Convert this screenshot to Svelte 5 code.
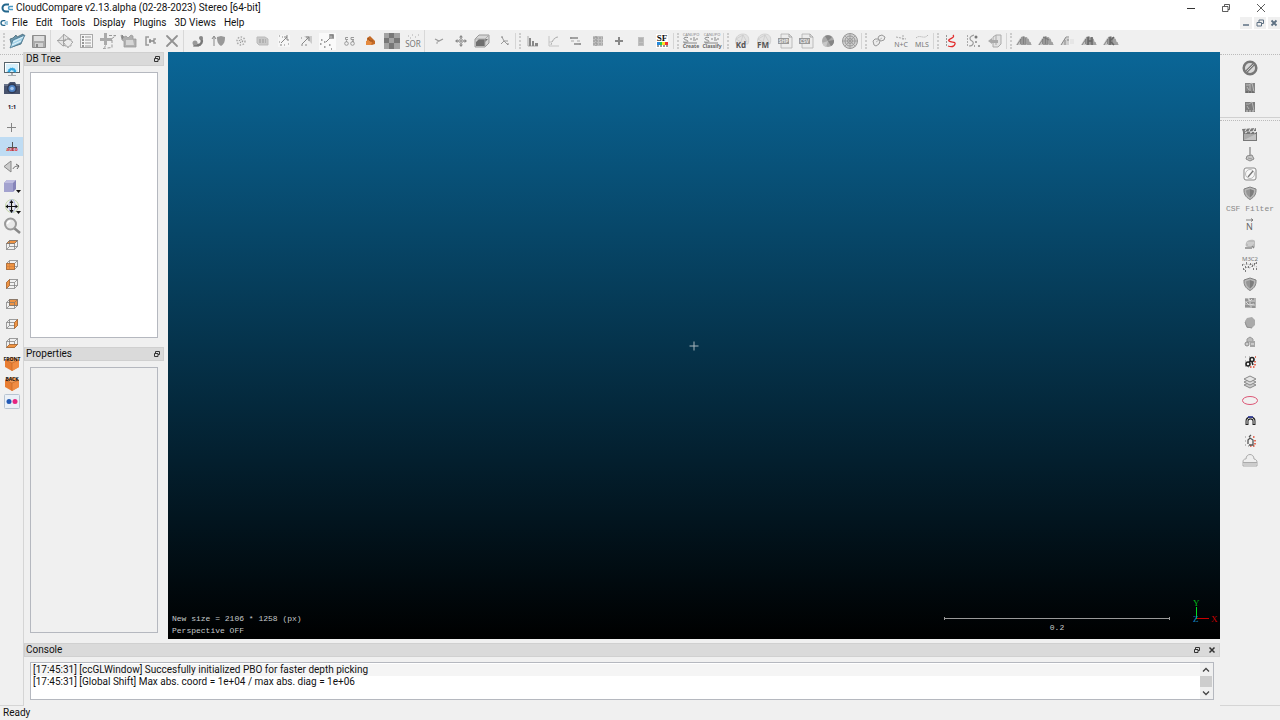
<script lang="ts">
	type Tool = { id: string; label: string };
	type Group = { width: number; handle?: boolean; tools: Tool[] };

	const t = (id: string, label: string): Tool => ({ id, label });

	const menus = ['File', 'Edit', 'Tools', 'Display', 'Plugins', '3D Views', 'Help'];

	const groups: Group[] = [
		{ width: 44, handle: true, tools: [t('open', 'Open'), t('save', 'Save')] },
		{
			width: 129,
			tools: [
				t('pick', 'Point picking'),
				t('list', 'Point list picking'),
				t('clone', 'Clone'),
				t('merge', 'Merge'),
				t('align', 'Match centers'),
				t('delete', 'Delete')
			]
		},
		{
			width: 237,
			tools: [
				t('register', 'Fine registration'),
				t('shieldUp', 'Align'),
				t('subsample', 'Subsample'),
				t('sample', 'Sample points'),
				t('c2c', 'Cloud to cloud distance'),
				t('c2m', 'Cloud to mesh distance'),
				t('pairs', 'Closest point set'),
				t('stats', 'Statistical test'),
				t('label', 'Label connected components'),
				t('checker', 'Cross section'),
				t('sor', 'SOR filter')
			]
		},
		{
			width: 87,
			tools: [
				t('segment', 'Segment'),
				t('move', 'Translate and rotate'),
				t('section', 'Clipping box'),
				t('trace', 'Trace polyline')
			]
		},
		{
			width: 151,
			handle: true,
			tools: [
				t('histogram', 'Histogram'),
				t('curve', 'Fit distribution'),
				t('range', 'Filter by value'),
				t('gaussian', 'Gaussian filter'),
				t('plus', 'Add scalar field'),
				t('calc', 'Scalar arithmetic'),
				t('sf', 'Color scale manager')
			]
		},
		{ width: 43, handle: true, tools: [t('canupoCreate', 'Canupo create'), t('canupoClassify', 'Canupo classify')] },
		{
			width: 131,
			handle: true,
			tools: [
				t('kd', 'Kd-tree facets'),
				t('fm', 'Fast marching facets'),
				t('shp', 'Export facets SHP'),
				t('csv', 'Export facets CSV'),
				t('disk', 'Classify facets'),
				t('stereogram', 'Stereogram')
			]
		},
		{ width: 65, handle: true, tools: [t('hough', 'Hough normals'), t('nc', 'Normals and curvature'), t('mls', 'MLS smoothing')] },
		{
			width: 66,
			handle: true,
			tools: [t('sRed', 'Extract sections'), t('sGray', 'Unfold'), t('box', 'Export sections')]
		},
		{
			width: 109,
			handle: true,
			tools: [
				t('peakA', 'Mesh boolean A'),
				t('peakB', 'Mesh boolean B'),
				t('peakC', 'Train'),
				t('peakD', 'Classify high'),
				t('peakE', 'Classify K')
			]
		}
	];

	const viewTools: Tool[] = [
		t('display', 'Display settings'),
		t('camera', 'Camera settings'),
		t('oneToOne', 'Zoom 1:1'),
		t('cross', 'Pick rotation center'),
		t('crossAuto', 'Auto-pick rotation center'),
		t('level', 'Level'),
		t('cube', 'Projection mode'),
		t('pan', 'Pivot visibility'),
		t('zoom', 'Zoom on selection'),
		t('viewTop', 'Top view'),
		t('viewFront', 'Front view'),
		t('viewLeft', 'Left side view'),
		t('viewBack', 'Back view'),
		t('viewRight', 'Right side view'),
		t('viewBottom', 'Bottom view'),
		t('isoFront', 'Front isometric view'),
		t('isoBack', 'Back isometric view'),
		t('stereo', 'Stereo mode')
	];

	const shaderTools: Tool[] = [t('forbid', 'Remove filter'), t('edl', 'EDL shader'), t('ssao', 'SSAO shader')];

	const pluginTopTools: Tool[] = [t('clap', 'Animation'), t('broom', 'Virtual broom'), t('compass', 'Compass'), t('shield', 'CSF')];

	const pluginTools: Tool[] = [
		t('normal', 'Hough normals computation'),
		t('hpr', 'Hidden point removal'),
		t('m3c2', 'M3C2 distance'),
		t('shield', 'Ambient occlusion'),
		t('noise', 'Poisson reconstruction'),
		t('blob', 'RANSAC shape detection'),
		t('shapes', 'Primitive shapes'),
		t('sra', 'Surface of revolution'),
		t('layers', 'Layers'),
		t('ellipse', 'Ellipser'),
		t('arch', 'Arch fitting'),
		t('tree', 'Tree isolation'),
		t('cloud', 'Voxfall')
	];

	const log = [
		'[17:45:31] [ccGLWindow] Succesfully initialized PBO for faster depth picking',
		'[17:45:31] [Global Shift] Max abs. coord = 1e+04 / max abs. diag = 1e+06'
	];

	// shared pieces of the 18x18 icons
	const wire =
		'<path d="M3.5 7.5h8v6h-8zM6.5 4.5h8v6h-8zM3.5 7.5l3-3M11.5 7.5l3-3M11.5 13.5l3-3M3.5 13.5l3-3" fill="none" stroke="#777" stroke-width=".7"/>';
	const face = (d: string) => `<path d="${d}" fill="#f09443" stroke="#a8622a" stroke-width=".7"/>`;
	const iso = (word: string) =>
		`<path d="M9 3l7 3v7l-7 4-7-4V6z" fill="#e87d32"/><path d="M2 6l7 3 7-3-7-3z" fill="#f3a05c"/><path d="M9 9v8l7-4V6z" fill="#f08c43"/><path d="M2 6l7 3v8M9 9l7-3" fill="none" stroke="#b55d22" stroke-width=".5"/><text x="9" y="7" font-size="5" font-weight="700" text-anchor="middle" fill="#111">${word}</text>`;
	const page = (word: string) =>
		`<path d="M5 2h8l3 3v11H5z" fill="#ececec" stroke="#b0b0b0" stroke-width=".8"/><path d="M13 2v3h3" fill="none" stroke="#999" stroke-width=".8"/><rect x="2" y="6" width="11" height="6" fill="#999"/><text x="7.5" y="10.5" font-size="5" font-weight="700" text-anchor="middle" fill="#e8e8e8">${word}</text>`;
	const ball = (word: string) =>
		`<path d="M4 12c-2-6 2-10 7-10s7 4 5 10z" fill="#e2e2e2" stroke="#c4c4c4" stroke-width=".6"/><path d="M4 7l5 3 2-7 4 7M4 7l7-4" fill="none" stroke="#c9c9c9" stroke-width=".7"/><text x="9" y="16" font-size="8" font-weight="700" text-anchor="middle" fill="#555">${word}</text>`;
	const peaks = (extra: string) =>
		`<path d="M1 13l4-7 2-1v8z" fill="#c6c6c6"/><path d="M6 13V5l3-1 2 2v7z" fill="#999"/><path d="M11 13V5l2 1 2 4 2 3z" fill="#bbb"/><path d="M2 13l4-6M5.5 7v5M8.5 5v7M11 5v7M13 7v6M15 10v3" stroke="#7a7a7a" stroke-width=".8"/>${extra}`;
	const canupo = (word: string) =>
		`<text x="9" y="4" font-size="4" text-anchor="middle" fill="#888">CANUPO</text><path d="M6 5.5c-5-1-5 2-2 2.5s3 3-3 2M2 11h13M8 7h2M11 6h2M11 8h3M14 7h2" fill="none" stroke="#888"/><text x="9" y="16" font-size="5" font-weight="700" text-anchor="middle" fill="#666">${word}</text>`;

	const icons: Record<string, string> = {
		open: '<path d="M2 7l3-1 3-3 1 2 6-3 1 2-3 8-9 3z" fill="#6d97ad" stroke="#486879" stroke-width=".8"/><path d="M5 8l12-5-4 8-11 5z" fill="#a5d3e9" stroke="#4c7890" stroke-width=".8"/><path d="M5 10l10-5M4 13l9-4" stroke="#e2f2f8"/>',
		save: '<path d="M2.5 3.5h13v12h-13z" fill="#aaa" stroke="#8c8c8c"/><path d="M4 4h10v5H4z" fill="#dedede"/><path d="M5 11h8v4H5z" fill="#d0d0d0"/><path d="M6 12h2v3H6z" fill="#888"/>',
		pick: '<path d="M1.5 9L8 2.5 14 7l-3 6-4 1z" fill="#e4e4e4" stroke="#a5a5a5"/><path d="M12 6l1 2 2-1v2l2 1-2 2v2h-2l-1 2-1-2H9v-2l-2-2 2-1V7l2 1z" fill="#ececec" stroke="#999" stroke-width=".8"/><path d="M1 8.5h9M7.5 2v12" stroke="#999" stroke-width=".8"/>',
		list: '<rect x="3.5" y="2.5" width="12" height="13" fill="#f5f5f5" stroke="#aaa"/><path d="M5 5h2M5 8h2M5 11h2M5 14h2" stroke="#777" stroke-width="1.5"/><path d="M8 5h6M8 8h6M8 11h6M8 14h6" stroke="#999"/>',
		clone: '<path d="M5 1h3v5h5v3H8v4H5V9H1V6h4z" fill="#aaa"/><path d="M10 3.5h7l-4 3v9l-9 1 3-3" fill="none" stroke="#999" stroke-dasharray="3 1.5"/>',
		merge: '<path d="M1 3l3 2 2-1 2 2 3-3 2 1v3h3v8H4V9L2 8z" fill="#b0b0b0" stroke="#999" stroke-width=".8"/><path d="M6 8h7l1 5H6z" fill="#d6d6d6"/><path d="M1 5h3M2.5 3v4" stroke="#888"/>',
		align: '<path d="M7 5H4v8h3M14 7h-2v4h2" fill="none" stroke="#999" stroke-width="1.5"/><path d="M7 9h5" stroke="#888" stroke-width="1.5"/><path d="M8 7v4" stroke="#888" stroke-width="1.5"/>',
		delete: '<path d="M4 4l10 10M14 4L4 14" stroke="#929292" stroke-width="1.8" stroke-linecap="round"/>',
		register: '<path d="M12 6c2 4 0 7-3 7H5" fill="none" stroke="#777" stroke-width="2.5"/><circle cx="12" cy="6" r="2" fill="#888"/><circle cx="6" cy="11" r="2.5" fill="#999"/><path d="M4 14h6" stroke="#777"/>',
		shieldUp: '<path d="M4 14V5M2 7l2-3 2 3" fill="none" stroke="#888"/><path d="M7 5l4-1 4 1c0 5-1 7-4 9-3-2-4-4-4-9z" fill="#999"/>',
		subsample: '<circle cx="9" cy="9" r="4" fill="none" stroke="#aaa" stroke-width="1.5" stroke-dasharray="1.5 1.5"/><circle cx="9" cy="9" r="1.5" fill="none" stroke="#999" stroke-width="1.5" stroke-dasharray="1 1"/>',
		sample: '<path d="M4 5h8l3 2v6H6l-2-2z" fill="#c9c9c9" stroke="#bbb"/><path d="M6 8h7M6 10h7" stroke="#999" stroke-dasharray="2 1"/>',
		c2c: '<rect x="3" y="3" width="12" height="12" fill="#f6f6f6"/><path d="M4 4h1M7 5h1M11 4h2M12 8h2M4 10h1M5 13h2M9 13h1M13 12h1" stroke="#aaa" stroke-width="1.5"/><path d="M6 11l6-6M9 5h3v3" fill="none" stroke="#888"/>',
		c2m: '<path d="M7 4h8v8z" fill="#ccc"/><path d="M4 6h1M4 13h2M8 13h2" stroke="#aaa" stroke-width="1.5"/><path d="M5 12l7-7M9 5h3v4" fill="none" stroke="#888"/>',
		pairs: '<rect x="1" y="1" width="17" height="17" fill="#fafafa"/><rect x="11" y="2" width="5" height="5" fill="#aaa"/><path d="M12 3h3v3" fill="none" stroke="#777"/><path d="M8 10l4-4" stroke="#888"/><path d="M3 8h1.5M2 12h1.5M6 10h1.5M6 15h1.5M11 13h1.5M13 17h1" stroke="#888" stroke-width="1.5"/>',
		stats: '<path d="M8 5.5H5.5v2H8M14 5.5h-3v2h3" fill="none" stroke="#999"/><circle cx="6.5" cy="11.5" r="1.8" fill="none" stroke="#999"/><circle cx="12.5" cy="11.5" r="1.8" fill="none" stroke="#999"/><path d="M6 9h1M12 9h2" stroke="#777"/>',
		label: '<path d="M6 12V6l3-2 2 2 3 3 0 3-3 1z" fill="#c46a26"/><path d="M5 13V9l3-1 3 2-1 3z" fill="#e58a3e"/><path d="M7 6l2 3 3 0" fill="none" stroke="#9b5220"/>',
		checker: '<rect x="1" y="1" width="16" height="16" fill="#777"/><path d="M1 1h5v5H1zM11 1h6v5h-6zM6 6h5v5H6zM1 11h5v6H1zM11 11h6v6h-6z" fill="#a3a3a3"/>',
		sor: '<path d="M4 4h1M8 3h1M11 5h1M14 3h1M6 6h1" stroke="#aaa"/><text x="9" y="15" font-size="8" text-anchor="middle" fill="#777">SOR</text>',
		segment: '<path d="M5 7l4 2 4-2M7 10l2-1" fill="none" stroke="#999" stroke-width="1.2"/><circle cx="7" cy="11" r=".8" fill="#999"/>',
		move: '<path d="M9 4v10M4 9h10" stroke="#888"/><path d="M7 5.5L9 3l2 2.5zM7 12.5L9 15l2-2.5zM5.5 7L3 9l2.5 2zM12.5 7L15 9l-2.5 2z" fill="#888"/><path d="M6 9l3-3 3 3-3 3z" fill="none" stroke="#999" stroke-width=".7"/>',
		section: '<path d="M2 7l4-4h10v8l-4 4H2z" fill="#d6d6d6" stroke="#999"/><path d="M3 10l3-3h9l-3 3v4H3z" fill="#6f6f6f"/><path d="M2 7h10v8M12 7l4-4" fill="none" stroke="#aaa"/>',
		trace: '<path d="M7 5l2 4h4M6 12l3-3 4 4" fill="none" stroke="#999"/><path d="M6 5h2M12 12h2" stroke="#888"/>',
		histogram: '<path d="M4 4v10h10" fill="none" stroke="#aaa"/><path d="M5 6h2v8H5zM8 9h2v5H8zM11 11h3v3h-3z" fill="#888"/>',
		curve: '<path d="M4 4v10h10M4 10h3l3-4 3-1" fill="none" stroke="#c4c4c4"/><path d="M6 13c1-4 3-8 7-8" fill="none" stroke="#b0b0b0" stroke-dasharray="2 1"/>',
		range: '<path d="M4 6h7M7 12h7" stroke="#888" stroke-width="1.5"/><path d="M4 9h3M10 9h3" stroke="#aaa"/><path d="M4 5v2M13 11v2" stroke="#999" stroke-width="2"/>',
		gaussian: '<rect x="4" y="4" width="10" height="10" fill="#c0c0c0"/><path d="M4 6h10M4 9h10M4 12h10M7 4v10" stroke="#929292" stroke-dasharray="2 1"/>',
		plus: '<path d="M9 5v8M5 9h8" stroke="#888" stroke-width="2"/>',
		calc: '<rect x="6" y="5" width="6" height="9" fill="#c0c0c0"/><path d="M7 7h4M7 9h4M7 12h4" stroke="#a5a5a5"/>',
		sf: '<rect x="3" y="2" width="12" height="14" fill="#fff"/><text x="9" y="9" font-size="9" font-weight="700" font-family="Liberation Serif" text-anchor="middle" fill="#111">SF</text><path d="M4 10h3v3H4z" fill="#28d"/><path d="M7 10h2v3H7z" fill="#2c5"/><path d="M9 10h3v3H9z" fill="#fd2"/><path d="M12 10h3v3h-3z" fill="#e33"/><path d="M4 14h11" stroke="#333" stroke-dasharray="2 1"/>',
		canupoCreate: canupo('Create'),
		canupoClassify: canupo('Classify'),
		kd: ball('Kd'),
		fm: ball('FM'),
		shp: page('SHP'),
		csv: page('CSV'),
		disk: '<circle cx="9" cy="9" r="6" fill="#aaa"/><path d="M9 9L6 4a6 6 0 0 1 7 1zM9 9l6-1a6 6 0 0 1-3 6z" fill="#858585"/><path d="M9 9l-6 2a6 6 0 0 0 4 4z" fill="#c8c8c8"/>',
		stereogram: '<circle cx="9" cy="9" r="7.5" fill="#d0d0d0" stroke="#999"/><circle cx="9" cy="9" r="5" fill="none" stroke="#999"/><circle cx="9" cy="9" r="2.5" fill="none" stroke="#999"/><path d="M1 9h16M9 1v16M3.5 3.5l11 11M14.5 3.5l-11 11" stroke="#999" stroke-width=".8"/>',
		hough: '<path d="M3 9l2-2h3l2 2-1 3-3 2-2-1zM8 6l1-2 3-1 3 2-1 3-3 1-2-1z" fill="#ececec" stroke="#999"/><path d="M6 10l6-4" stroke="#bbb"/>',
		nc: '<path d="M4 5l10 2M11 3v5" stroke="#aaa" stroke-dasharray="2 1"/><text x="9" y="15" font-size="7" text-anchor="middle" fill="#777">N+C</text>',
		mls: '<path d="M3 6c4-4 8 2 12-3" fill="none" stroke="#aaa" stroke-dasharray="1 1"/><text x="9" y="15" font-size="7" text-anchor="middle" fill="#777">MLS</text>',
		sRed: '<path d="M4.5 3v12" stroke="#999" stroke-dasharray="2 1"/><path d="M11 3c3 3-6 4-4 6s7 0 6 3-4 3-7 2" fill="none" stroke="#e22c2c" stroke-width="1.3"/>',
		sGray: '<path d="M3.5 3v12" stroke="#aaa" stroke-dasharray="2 1"/><path d="M10 3C4 5 6 8 8 9s2 5-3 5" fill="none" stroke="#999" stroke-width="1.2"/><circle cx="12" cy="5" r="1.5" fill="#777"/><path d="M11 10h2M14 14h2M10 14h1" stroke="#888" stroke-width="1.5"/>',
		box: '<path d="M7 5l3-2h5v9l-3 3H7z" fill="#e2e2e2" stroke="#aaa"/><path d="M2 9l4-3v2h6v3H6v1z" fill="#aaa"/><path d="M10 3v10" stroke="#aaa"/>',
		peakA: peaks(''),
		peakB: peaks('<path d="M6 5l6 3" stroke="#777"/>'),
		peakC: '<path d="M3 13l4-7h4v7" fill="#d0d0d0"/><path d="M3 13l5-8h3M7 8v5M10 7v2" fill="none" stroke="#888"/><path d="M12 7h4v5h-4z" fill="#e6e6e6"/>',
		peakD: peaks('<path d="M8 5v8M12 5v8M8 9h4" stroke="#666" stroke-width="1.5"/>'),
		peakE: peaks('<path d="M8 5v8M12 5L8 9l4 4" fill="none" stroke="#666" stroke-width="1.5"/>'),
		display: '<rect x="1.5" y="3.5" width="15" height="10" fill="#fff" stroke="#57656d"/><path d="M3 5h12v8H3z" fill="#d5effb"/><path d="M5 13a4 4 0 0 1 8 0h-2a2 2 0 0 0-4 0z" fill="#2fa5df" stroke="#2fa5df" stroke-dasharray="1 1"/><path d="M8 14h2v2H8zM5 16h8v1H5z" fill="#a5abb0"/>',
		camera: '<path d="M1 5h4l2-2h5l1 2h4v10H1z" fill="#48536d"/><circle cx="9" cy="9.5" r="5" fill="#303b56"/><circle cx="9" cy="9.5" r="3.5" fill="#4c80c2"/><circle cx="9" cy="9.5" r="1.8" fill="#a5c5ec"/><path d="M1 6h4M13 6h4" stroke="#8792a5"/>',
		oneToOne: '<text x="9" y="11" font-size="6" font-weight="700" text-anchor="middle" fill="#2b1433">1:1</text>',
		cross: '<path d="M8.5 5v9M4 9.5h9" stroke="#858585"/>',
		crossAuto: '<path d="M9.5 4v9M5 9.5h9" stroke="#555"/><text x="9" y="13" font-size="5" font-weight="700" text-anchor="middle" fill="#df3535">auto</text>',
		level: '<path d="M8 4v11L1 9.5z" fill="#ccc" stroke="#888"/><path d="M10 12c1-2 2-3 6-3M13 7l3 2-2 3" fill="none" stroke="#666"/>',
		cube: '<path d="M1 6l3-3h9v9l-3 3H1z" fill="#8684b9"/><path d="M1 6h9v9H1z" fill="#a3a2cf"/><path d="M1 6l3-3h9l-3 3z" fill="#bfbde0"/><path d="M13 13h5l-2.5 3z" fill="#111"/>',
		pan: '<circle cx="9" cy="9" r="6.5" fill="none" stroke="#c3d6a8"/><ellipse cx="9" cy="9" rx="3" ry="6.5" fill="none" stroke="#b3bce5"/><path d="M8.5 4v11M3 9.5h11" stroke="#111" stroke-width="1.2"/><path d="M6.5 6l2-3 2 3zM6.5 13l2 3 2-3zM5 7.5l-2.5 2 2.5 2zM12.5 7.5l2.5 2-2.5 2z" fill="#111"/><path d="M13 14h5l-2.5 3z" fill="#111"/>',
		zoom: '<path d="M11 12l6 5" stroke="#888" stroke-width="2.5"/><circle cx="7.5" cy="8" r="5.5" fill="#e8e8e8" stroke="#999" stroke-width="2"/><path d="M4.5 8a3 3 0 0 1 3-3" fill="none" stroke="#fff" stroke-width="1.5"/>',
		viewTop: face('M3.5 7.5l3-3h8l-3 3z') + wire,
		viewFront: wire + face('M3.5 7.5h8v6h-8z') + '<path d="M6.5 7.5v6M3.5 10.5h8" stroke="#c47a42" stroke-width=".5"/>',
		viewLeft: wire + face('M3.5 7.5l3-3v6l-3 3z'),
		viewBack: face('M6.5 4.5h8v6h-8z') + wire,
		viewRight: wire + face('M11.5 7.5l3-3v6l-3 3z'),
		viewBottom: wire + face('M3.5 13.5l3-3h8l-3 3z'),
		isoFront: iso('FRONT'),
		isoBack: iso('BACK'),
		stereo: '<rect x="1.5" y="1.5" width="15" height="14" rx="1" fill="#eaf0f7" stroke="#b8c4d1"/><circle cx="6" cy="8.5" r="2.5" fill="#2159b5"/><circle cx="12" cy="8.5" r="2.5" fill="#e52580"/>',
		forbid: '<circle cx="9" cy="9" r="6.3" fill="#d9d9d9" stroke="#777" stroke-width="2.5"/><path d="M5 13l8-8" stroke="#777" stroke-width="3"/><path d="M5.5 12.5l7-7" stroke="#ccc"/>',
		edl: '<rect x="4" y="4" width="10" height="10" fill="#858585"/><path d="M5 6h3l3-2 1 4 1 5M6 8l2 3M9 6v6" fill="none" stroke="#bbb"/><path d="M5 13h8" stroke="#555" stroke-dasharray="2 1"/>',
		ssao: '<rect x="4" y="4" width="10" height="10" fill="#7d7d7d"/><path d="M5 6h3l3-2 1 4 1 5M6 8l2 3" fill="none" stroke="#b5b5b5"/><path d="M5 13h8" stroke="#ccc" stroke-dasharray="2 1"/>',
		clap: '<path d="M2 6h14v9H2z" fill="#777"/><path d="M3 8h12v6H3z" fill="#aaa"/><path d="M3 14l12-6v6z" fill="#c3c3c3"/><path d="M1 3l14-1v3L2 6z" fill="#777"/><path d="M4 5l2-3M8 5l2-3M12 5l2-3M4 7l2-1M9 7l2-1M13 7l2-1" stroke="#eee"/>',
		broom: '<path d="M9 2v8" stroke="#888" stroke-width="1.3"/><path d="M6 11l5-1 2 4-4 2-4-2z" fill="#c6c6c6" stroke="#888"/><path d="M7 13l4 1" stroke="#999"/>',
		compass: '<rect x="3" y="3" width="12" height="12" rx="2" fill="#f8f8f8" stroke="#888"/><circle cx="9" cy="9" r="4.5" fill="#f8f8f8" stroke="#aaa" stroke-width=".8"/><path d="M12 6l-5 6" stroke="#777" stroke-width="1.3"/>',
		shield: '<path d="M9 3l6 2c.3 5-1.5 8-6 10.5C4.5 13 2.7 10 3 5z" fill="#b7b7b7" stroke="#808080"/><path d="M9 5l4 1.5c0 3-1.2 5-4 7z" fill="#7d7d7d"/><path d="M9 5L5 6.5c0 3 1.2 5 4 7z" fill="#959595"/>',
		normal: '<path d="M5 4h7M10 2.5L12 4l-2 1.5" fill="none" stroke="#666" stroke-width=".8"/><text x="8.5" y="13.5" font-size="9" text-anchor="middle" fill="#666">N</text>',
		hpr: '<path d="M5 8c1-4 8-4 9-2v6H8c-3 0-4-1-3-4z" fill="#bbb"/><path d="M6 8h7M7 10h5" stroke="#ddd"/><path d="M4 13h7M11 11l2 2" stroke="#888" stroke-width="1.5"/>',
		m3c2: '<text x="9" y="6" font-size="6" text-anchor="middle" fill="#777">M3C2</text><path d="M2 9l2 1 3-1 2 1 3-1 4-1M3 15l3-3 3 1 3-3 4 2" fill="none" stroke="#aaa" stroke-dasharray="2 1"/><path d="M1 10h1M5 8h1M15 8h1M2 14h1M7 12h1M11 11h1M15 14h1M4 16h1M12 14h1M9 9h1M13 9h1M4 12h1" stroke="#555" stroke-width="1.5"/>',
		noise: '<rect x="4" y="4" width="11" height="10" fill="#b5b5b5"/><path d="M4 6h3M9 5h4M5 9h3M10 9h4M4 12h5M11 13h3" stroke="#888" stroke-width="1.5"/><path d="M7 4l2 3 2-2M5 8l3 3 5-1" fill="none" stroke="#ddd"/>',
		blob: '<path d="M6 4l5-1 3 3v5l-3 3H6l-2-4V7z" fill="#aaa"/><path d="M4 8l2 5 5 1" fill="none" stroke="#929292"/>',
		shapes: '<path d="M6 6l3-2 3 2v3H6z" fill="#bbb" stroke="#999"/><circle cx="6" cy="11" r="2" fill="#ccc" stroke="#888"/><path d="M9 8h5v6H9z" fill="#a5a5a5"/><path d="M10 11h3" stroke="#eee"/>',
		sra: '<path d="M4 4h1M8 4h1M4 8h1M4 13h1M7 14h1" stroke="#aaa" stroke-width="1.5"/><path d="M9 14h6M14 8v5M14 4h1" stroke="#e2452c" stroke-width="1.5" stroke-dasharray="1.5 1.5"/><circle cx="11" cy="6.5" r="2" fill="none" stroke="#222" stroke-width="1.6"/><circle cx="7" cy="11" r="2" fill="none" stroke="#222" stroke-width="1.6"/><path d="M8 9l2-1M11 9l1 3" stroke="#222" stroke-width="1.5"/>',
		layers: '<path d="M3 12l6-3 6 3-6 3z" fill="#ccc" stroke="#888"/><path d="M3 9l6-3 6 3-6 3z" fill="#ddd" stroke="#888"/><path d="M3 6l6-3 6 3-6 3z" fill="#e5e5e5" stroke="#888"/>',
		ellipse: '<ellipse cx="9" cy="8.5" rx="7.5" ry="4" fill="none" stroke="#dd5675"/>',
		arch: '<path d="M6 13V9c0-4 7-4 7 0v4" fill="none" stroke="#222" stroke-width="3"/><path d="M6 12V9c0-4 7-4 7 0v3" fill="none" stroke="#ddd"/><path d="M7 5h5" stroke="#28349d" stroke-width="1.5"/>',
		tree: '<path d="M4 5h1M4 9h1M4 13h1M7 14h1" stroke="#aaa" stroke-width="1.5"/><path d="M9 14h6M14 8v6M12 5h3" stroke="#e2452c" stroke-width="1.5" stroke-dasharray="1.5 1.5"/><path d="M7 12V8l2-2 3 2v5H8M8 5l2-2" fill="none" stroke="#555" stroke-width="1.3"/>',
		cloud: '<path d="M2 11c0-3 2-3 3-3 0-6 8-6 8 0 2 0 3 2 3 3v4H2z" fill="#eee" stroke="#aaa"/><path d="M2 11.5h14M4 12v2M6 12v2M8 12v2M10 12v2M12 12v2M14 12v2" stroke="#aaa"/>'
	};
</script>

{#snippet icon(id: string)}
	<svg width="18" height="18" viewBox="0 0 18 18" aria-hidden="true">{@html icons[id]}</svg>
{/snippet}

{#snippet logo(size: number)}
	<svg width={size} height={size} viewBox="0 0 12 12" aria-hidden="true">
		<path d="M8 2.5H5A3.5 3.5 0 0 0 5 9.5H8" fill="none" stroke="#23668c" stroke-width="2" />
		<path d="M12 4.5H9A1.5 1.5 0 0 0 9 7.5H12" fill="none" stroke="#4b9bc5" stroke-width="1.5" />
	</svg>
{/snippet}

{#snippet floatGlyph()}
	<svg width="8" height="8" viewBox="0 0 8 8" aria-hidden="true">
		<path d="M2.5 3V1.5h4v3H5M1.5 3.5H5v3H1.5z" fill="none" stroke="#333" />
	</svg>
{/snippet}

<div class="window">
	<header class="titlebar">
		{@render logo(12)}
		<h1>CloudCompare v2.13.alpha (02-28-2023) Stereo [64-bit]</h1>
		<div class="window-buttons">
			<button type="button" aria-label="Minimize">
				<svg width="10" height="10" viewBox="0 0 10 10"><path d="M1 5.5h8" stroke="#333" /></svg>
			</button>
			<button type="button" aria-label="Restore">
				<svg width="10" height="10" viewBox="0 0 10 10">
					<path d="M3.5 3V1.5h5v5H7M1.5 3.5H7v5H1.5z" fill="none" stroke="#333" stroke-width=".8" />
				</svg>
			</button>
			<button type="button" aria-label="Close">
				<svg width="10" height="10" viewBox="0 0 10 10"><path d="M1 1l8 8M9 1L1 9" stroke="#333" stroke-width=".8" /></svg>
			</button>
		</div>
	</header>

	<nav class="menubar">
		{@render logo(8)}
		{#each menus as menu}
			<button type="button">{menu}</button>
		{/each}
		<div class="mdi-buttons">
			<button type="button" aria-label="Minimize view">
				<svg width="8" height="8" viewBox="0 0 8 8"><path d="M1 6h6" stroke="#5e7183" stroke-width="1.5" /></svg>
			</button>
			<button type="button" aria-label="Restore view">
				<svg width="8" height="8" viewBox="0 0 8 8"><path d="M3 3V1h4.5v3.5H6M1 3.5h4.5V7H1z" fill="none" stroke="#5e7183" /></svg>
			</button>
			<button type="button" aria-label="Close view">
				<svg width="8" height="8" viewBox="0 0 8 8"><path d="M1.5 1.5l5 5M6.5 1.5l-5 5" stroke="#5e7183" stroke-width="1.8" /></svg>
			</button>
		</div>
	</nav>

	<div class="toolbar" role="toolbar" aria-label="Main tools">
		{#each groups as group, i}
			<span class={group.handle ? 'handle' : 'separator'} class:first={i === 0}></span>
			<div class="group" style="width: {group.width}px">
				{#each group.tools as tool}
					<button type="button" aria-label={tool.label}>{@render icon(tool.id)}</button>
				{/each}
			</div>
		{/each}
	</div>

	<div class="body">
		<div class="side left" role="toolbar" aria-label="View tools">
			<div class="view-tools">
				{#each viewTools as tool}
					<button type="button" class:active={tool.id === 'crossAuto'} aria-label={tool.label}>{@render icon(tool.id)}</button>
				{/each}
			</div>
		</div>

		<main>
			<div class="workspace">
				<div class="docks">
					<section class="dock">
						<div class="dock-head">
							<h2>DB Tree</h2>
							<button type="button" aria-label="Float DB Tree">{@render floatGlyph()}</button>
						</div>
						<div class="panel white"></div>
					</section>
					<section class="dock">
						<div class="dock-head">
							<h2>Properties</h2>
							<button type="button" aria-label="Float Properties">{@render floatGlyph()}</button>
						</div>
						<div class="panel"></div>
					</section>
				</div>

				<div class="view">
					<svg class="pivot" width="11" height="11" viewBox="0 0 11 11" aria-hidden="true">
						<path d="M5.5 1v9M1 5.5h9" stroke="#a9b6bd" />
					</svg>
					<div class="messages">
						<div>New size = 2106 * 1258 (px)</div>
						<div>Perspective OFF</div>
					</div>
					<div class="scale">
						<span class="scale-bar"></span>
						<span>0.2</span>
					</div>
					<svg class="axes" width="28" height="28" viewBox="0 0 28 28" aria-label="Axes">
						<path d="M7.5 8v12" stroke="#00e020" />
						<path d="M8 19.5h12" stroke="#c80000" />
						<text x="4" y="7" fill="#00b818">Y</text>
						<text x="22" y="23" fill="#c80000">X</text>
						<text x="4" y="23" fill="#1687c7">Z</text>
					</svg>
				</div>
			</div>

			<section class="console">
				<div class="dock-head">
					<h2>Console</h2>
					<button type="button" aria-label="Float Console">{@render floatGlyph()}</button>
					<button type="button" aria-label="Close Console">
						<svg width="8" height="8" viewBox="0 0 8 8"><path d="M1.5 1.5l5 5M6.5 1.5l-5 5" stroke="#333" stroke-width="1.5" /></svg>
					</button>
				</div>
				<div class="log">
					<ul>
						{#each log as line}
							<li>{line}</li>
						{/each}
					</ul>
					<div class="scroller">
						<button type="button" aria-label="Scroll up">
							<svg width="8" height="6" viewBox="0 0 8 6"><path d="M1 4.5l3-3 3 3" fill="none" stroke="#444" stroke-width="1.3" /></svg>
						</button>
						<span class="thumb"></span>
						<button type="button" aria-label="Scroll down">
							<svg width="8" height="6" viewBox="0 0 8 6"><path d="M1 1.5l3 3 3-3" fill="none" stroke="#444" stroke-width="1.3" /></svg>
						</button>
					</div>
				</div>
			</section>
		</main>

		<div class="side right" role="toolbar" aria-label="Plugins">
			<div class="stack shaders">
				{#each shaderTools as tool}
					<button type="button" aria-label={tool.label}>{@render icon(tool.id)}</button>
				{/each}
			</div>
			<div class="stack plugins-top">
				{#each pluginTopTools as tool}
					<button type="button" aria-label={tool.label}>{@render icon(tool.id)}</button>
				{/each}
			</div>
			<button type="button" class="csf">CSF Filter</button>
			<div class="stack plugins">
				{#each pluginTools as tool}
					<button type="button" aria-label={tool.label}>{@render icon(tool.id)}</button>
				{/each}
			</div>
		</div>
	</div>

	<footer>Ready</footer>
</div>

<style>
	:global(body) {
		margin: 0;
		background: #f0f0f0;
	}

	.window {
		display: flex;
		flex-direction: column;
		height: 100vh;
		overflow: hidden;
		font-family: Roboto, 'Open Sans', sans-serif;
		font-size: 10px;
		line-height: 12px;
		color: #111;
		background: #f0f0f0;
	}

	button {
		display: flex;
		align-items: center;
		justify-content: center;
		min-width: 0;
		min-height: 0;
		padding: 0;
		border: 0;
		background: none;
		font: inherit;
		color: inherit;
	}

	svg {
		display: block;
		flex: none;
		overflow: visible;
		font-family: 'Noto Sans', sans-serif;
	}

	h1,
	h2 {
		margin: 0;
		font-size: inherit;
		font-weight: 400;
		white-space: nowrap;
	}

	.titlebar {
		display: flex;
		align-items: center;
		gap: 3px;
		height: 16px;
		padding: 0 2px 0 1px;
		background: #fff;
	}

	.window-buttons {
		display: flex;
		margin-left: auto;
	}

	.window-buttons button {
		width: 35px;
	}

	.menubar {
		display: flex;
		align-items: center;
		height: 14px;
		background: #fff;
	}

	.menubar > button {
		padding: 0 4px;
		white-space: nowrap;
	}

	.mdi-buttons {
		display: flex;
		gap: 2px;
		margin-left: auto;
	}

	.mdi-buttons button {
		width: 12px;
		height: 12px;
		background: #f0f0f0;
	}

	.toolbar {
		display: flex;
		align-items: stretch;
		height: 22px;
	}

	.group {
		display: flex;
		flex: none;
	}

	.group button {
		flex: 1;
	}

	.separator {
		width: 3px;
		border-left: 1px solid #d8d8d8;
	}

	.handle {
		width: 3px;
		margin: 3px 1px 3px 0;
		border-left: 1px solid #d5d5d5;
		border-right: 2px dotted #ccc;
	}

	.handle.first {
		border-left: 0;
	}

	.body {
		display: flex;
		flex: 1;
		min-height: 0;
	}

	.side {
		display: flex;
		flex-direction: column;
		box-sizing: border-box;
		flex: none;
		border-bottom: 1px solid #d5d5d5;
	}

	.left {
		width: 24px;
		border-right: 1px solid #d5d5d5;
	}

	.view-tools {
		display: flex;
		flex-direction: column;
		height: 354px;
		margin-top: 2px;
		padding-top: 3px;
		border-top: 1px dotted #bbb;
	}

	.view-tools button {
		flex: 1;
	}

	.active {
		background: #bfdcf3;
	}

	.right {
		width: 60px;
	}

	.stack {
		display: flex;
		flex-direction: column;
	}

	.stack button {
		flex: 1;
	}

	.shaders {
		height: 59px;
		margin-top: 2px;
		padding-top: 3px;
		border-top: 1px dotted #bbb;
		border-bottom: 1px solid #d0d0d0;
	}

	.plugins-top {
		height: 78px;
		margin-top: 2px;
		padding-top: 4px;
		border-top: 1px dotted #bbb;
	}

	.csf {
		height: 12px;
		font-family: 'Liberation Mono', monospace;
		font-size: 8px;
		color: #888;
	}

	.plugins {
		height: 255px;
	}

	main {
		display: flex;
		flex: 1;
		flex-direction: column;
		min-width: 0;
	}

	.workspace {
		display: flex;
		flex: 1;
		gap: 4px;
		min-height: 0;
	}

	.docks {
		display: flex;
		flex: none;
		flex-direction: column;
		gap: 3px;
		width: 140px;
	}

	.dock {
		display: flex;
		flex: 1;
		flex-direction: column;
	}

	.dock-head {
		display: flex;
		align-items: center;
		gap: 7px;
		box-sizing: border-box;
		height: 14px;
		padding: 0 2px 0 1px;
		border: 1px solid #d0d0d0;
		background: #dadada;
	}

	.dock-head h2 {
		margin-right: auto;
	}

	.panel {
		flex: 1;
		margin: 6px;
		border: 1px solid #b5b8bf;
	}

	.panel.white {
		background: #fff;
	}

	.view {
		position: relative;
		flex: 1;
		background: linear-gradient(#0a6697, #000);
		font-family: 'Liberation Mono', monospace;
		font-size: 8px;
		color: #c5c9cb;
	}

	.pivot {
		position: absolute;
		top: 50%;
		left: 50%;
		transform: translate(-50%, -50%);
	}

	.messages {
		position: absolute;
		bottom: 2px;
		left: 4px;
	}

	.scale {
		position: absolute;
		right: 50px;
		bottom: 5px;
		display: flex;
		flex-direction: column;
		align-items: center;
		gap: 2px;
		width: 226px;
	}

	.scale-bar {
		width: 100%;
		height: 3px;
		box-sizing: border-box;
		border: solid #999;
		border-width: 0 1px;
		background: linear-gradient(#999, #999) center / 100% 1px no-repeat;
	}

	.axes {
		position: absolute;
		right: 3px;
		bottom: 12px;
		font-family: 'Liberation Serif', serif;
		font-size: 9px;
	}

	.console {
		flex: none;
		margin-top: 4px;
	}

	.console .dock-head {
		padding-right: 3px;
	}

	.log {
		display: flex;
		height: 36px;
		margin: 5px 6px 6px;
		border: 1px solid #b5b8bf;
		background: #fff;
	}

	.log ul {
		flex: 1;
		min-width: 0;
		margin: 1px 0;
		padding: 0;
		list-style: none;
		white-space: nowrap;
	}

	.log li {
		padding-left: 2px;
	}

	.log li:first-child {
		background: #f5f5f5;
	}

	.scroller {
		display: flex;
		flex-direction: column;
		width: 12px;
		padding: 1px 1px 0 0;
		background: #f0f0f0;
	}

	.scroller button {
		flex: 1;
	}

	.thumb {
		height: 11px;
		background: #cdcdcd;
	}

	footer {
		box-sizing: border-box;
		height: 14px;
		padding: 1px 0 0 3px;
	}
</style>
